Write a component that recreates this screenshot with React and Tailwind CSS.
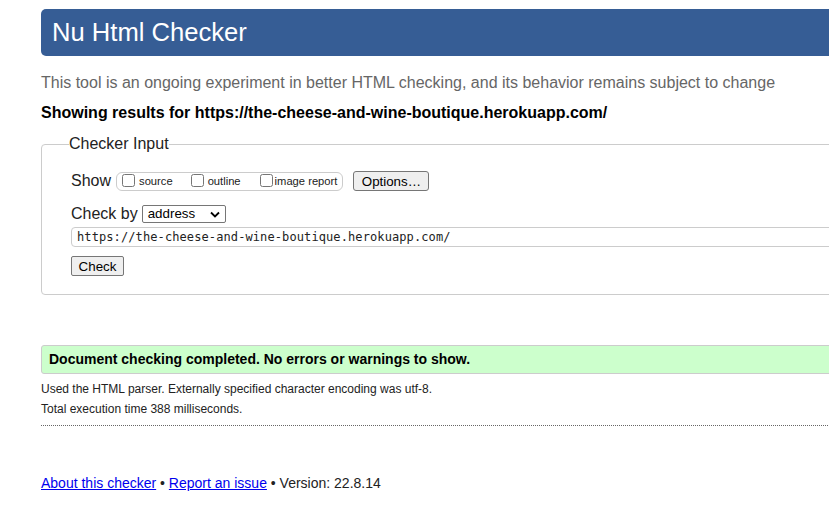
import React from "react";

export default function App() {
  const url = "https://the-cheese-and-wine-boutique.herokuapp.com/";

  return (
    <div className="w-[829px] h-[513px] overflow-hidden bg-white" style={{ fontFamily: '"Liberation Sans", Arial, sans-serif' }}>
      <div className="w-[1100px] pl-[41px] pt-[9px]">
        <h1 className="h-[47px] flex items-center pl-[11px] rounded-[5px] bg-[#365d95] text-white text-[25.6px] font-normal">
          Nu Html Checker
        </h1>

        <p className="mt-[18px] text-[16px] leading-[18px] text-[#666]">
          This tool is an ongoing experiment in better HTML checking, and its behavior remains subject to change
        </p>
        <h2 className="mt-[12px] text-[16px] leading-[18px] font-bold text-black">
          Showing results for {url}
        </h2>

        <fieldset className="mt-[13px] border border-[#ccc] rounded-[4px] pl-[29px] pb-[18px]">
          <legend className="-ml-[2px] px-0 text-[16px] leading-[18px] text-[#222]">Checker Input</legend>

          <div className="mt-[18px] flex items-center h-[20px]">
            <span className="text-[16px] text-[#222]">Show</span>
            <div className="ml-[5px] flex items-center h-[19px] border border-[#ccc] rounded-[6px] pl-[5px] pr-[5px] text-[11.2px] text-[#222]">
              <label className="flex items-center">
                <input type="checkbox" className="m-0 w-[13px] h-[13px]" />
                <span className="ml-[4px]">source</span>
              </label>
              <label className="flex items-center ml-[18px]">
                <input type="checkbox" className="m-0 w-[13px] h-[13px]" />
                <span className="ml-[4px]">outline</span>
              </label>
              <label className="flex items-center ml-[19px]">
                <input type="checkbox" className="m-0 w-[13px] h-[13px]" />
                <span className="ml-[2px]">image report</span>
              </label>
            </div>
            <button className="ml-[10px] h-[20px] w-[76px] bg-[#efefef] border border-[#767676] rounded-[3px] text-[13.33px] text-black">
              Options…
            </button>
          </div>

          <div className="mt-[14px] flex items-center h-[18px]">
            <span className="text-[16px] text-[#222]">Check by</span>
            <div className="ml-[4px] h-[18px] w-[84px] border border-[#767676] rounded-[2px] flex items-center justify-between pl-[5px] pr-[5px] text-[13.33px] text-black">
              <span>address</span>
              <svg width="10" height="7" viewBox="0 0 10 7">
                <path d="M1 1.5 L5 5.5 L9 1.5" fill="none" stroke="#000" strokeWidth="1.8" />
              </svg>
            </div>
          </div>

          <div className="mt-[4px] h-[20px] border border-[#ccc] rounded-[4px] flex items-center pl-[5px] text-[12px] tracking-[0.1px] text-[#222]" style={{ fontFamily: '"DejaVu Sans Mono", "Liberation Mono", monospace' }}>
            {url}
          </div>

          <button className="mt-[9px] block h-[20px] w-[53px] bg-[#efefef] border border-[#767676] rounded-[2px] text-[13.33px] text-black">
            Check
          </button>
        </fieldset>

        <div className="mt-[50px] h-[29px] flex items-center pl-[7px] bg-[#ccffcc] border border-[#ccc] rounded-[3px] text-[14px] font-bold text-black">
          Document checking completed. No errors or warnings to show.
        </div>

        <div className="mt-[5px] text-[12px] leading-[20px] text-[#222]">
          <p>Used the HTML parser. Externally specified character encoding was utf-8.</p>
          <p>Total execution time 388 milliseconds.</p>
        </div>

        <div className="mt-[6px] border-t border-dotted border-[#666]" />

        <p className="mt-[49px] text-[14px] leading-[16px] text-[#222]">
          <a href="#" className="text-[#0000ee] underline">About this checker</a>
          {" • "}
          <a href="#" className="text-[#0000ee] underline">Report an issue</a>
          {" • Version: 22.8.14"}
        </p>
      </div>
    </div>
  );
}
